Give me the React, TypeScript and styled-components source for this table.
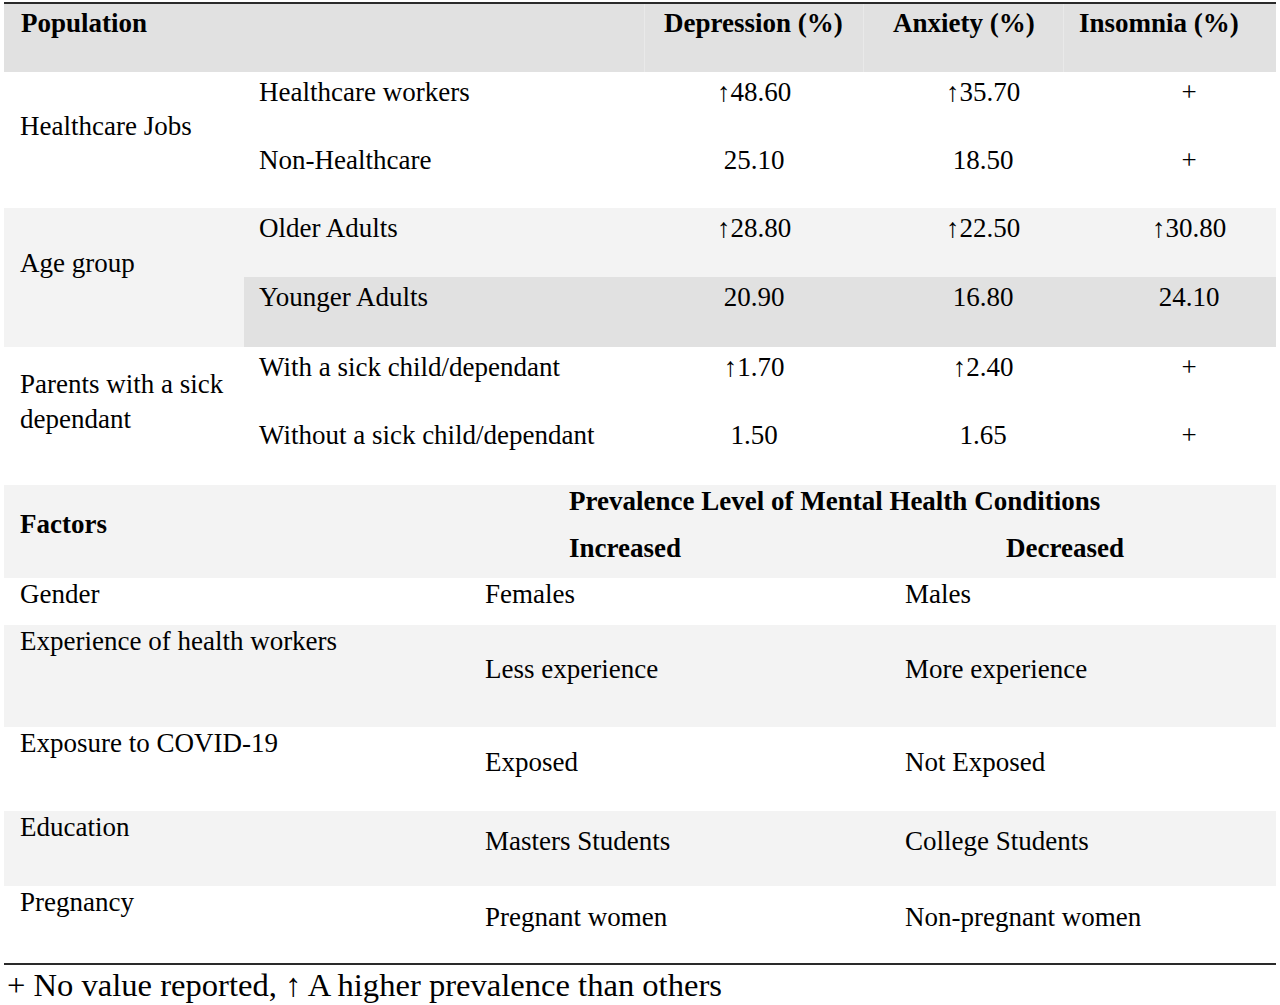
import React from 'react';
import styled, { createGlobalStyle } from 'styled-components';

const GlobalStyle = createGlobalStyle`
  html, body {
    margin: 0;
    padding: 0;
    background: #ffffff;
  }
  body {
    font-family: 'Liberation Serif', 'Times New Roman', serif;
    color: #000;
  }
`;

const SHADE_DARK = '#e1e1e1';
const SHADE_LIGHT = '#f3f3f3';

type Shade = 'none' | 'light' | 'dark';
const shadeColor = (s?: Shade) =>
  s === 'dark' ? SHADE_DARK : s === 'light' ? SHADE_LIGHT : 'transparent';

interface SubRowData {
  label: string;
  values: [string, string, string];
  height: number;
  shade?: Shade;
}

interface GroupData {
  label: string;
  shade?: Shade;
  rows: SubRowData[];
}

interface FactorData {
  factor: string;
  increased: string;
  decreased: string;
  height: number;
  shade?: Shade;
}

const groups: GroupData[] = [
  {
    label: 'Healthcare Jobs',
    rows: [
      { label: 'Healthcare workers', values: ['↑48.60', '↑35.70', '+'], height: 68 },
      { label: 'Non-Healthcare', values: ['25.10', '18.50', '+'], height: 68 },
    ],
  },
  {
    label: 'Age group',
    shade: 'light',
    rows: [
      { label: 'Older Adults', values: ['↑28.80', '↑22.50', '↑30.80'], height: 69 },
      { label: 'Younger Adults', values: ['20.90', '16.80', '24.10'], height: 70, shade: 'dark' },
    ],
  },
  {
    label: 'Parents with a sick dependant',
    rows: [
      { label: 'With a sick child/dependant', values: ['↑1.70', '↑2.40', '+'], height: 68 },
      { label: 'Without a sick child/dependant', values: ['1.50', '1.65', '+'], height: 70 },
    ],
  },
];

const factors: FactorData[] = [
  { factor: 'Gender', increased: 'Females', decreased: 'Males', height: 47 },
  {
    factor: 'Experience of health workers',
    increased: 'Less experience',
    decreased: 'More experience',
    height: 102,
    shade: 'light',
  },
  { factor: 'Exposure to COVID-19', increased: 'Exposed', decreased: 'Not Exposed', height: 84 },
  {
    factor: 'Education',
    increased: 'Masters Students',
    decreased: 'College Students',
    height: 75,
    shade: 'light',
  },
  { factor: 'Pregnancy', increased: 'Pregnant women', decreased: 'Non-pregnant women', height: 77 },
];

const Page = styled.div`
  width: 1272px;
  padding: 2px 4px 0 4px;
  font-size: 27px;
  line-height: 31px;
`;

const TopRule = styled.div`
  height: 2px;
  background: #2a2a2a;
`;

const BottomRule = styled.div`
  height: 2px;
  background: #2a2a2a;
`;

// header columns don't line up with the body columns in the source table
const HeadRow = styled.div`
  display: grid;
  grid-template-columns: 640px 219px 200px 213px;
  height: 68px;
  background: ${SHADE_DARK};
  font-weight: 700;
`;

const HeadCell = styled.div<{ $indent?: number; $divider?: boolean }>`
  padding: 4px 0 0 ${(p) => p.$indent ?? 16}px;
  border-left: 1px solid ${(p) => (p.$divider ? '#e9e9e9' : 'transparent')};
  white-space: nowrap;
`;

const Group = styled.div<{ $shade?: Shade }>`
  display: grid;
  grid-template-columns: 240px 1032px;
  background: ${(p) => shadeColor(p.$shade)};
`;

const GroupLabel = styled.div`
  display: flex;
  align-items: center;
  padding: 0 16px 28px;
  line-height: 35px;
`;

const SubRows = styled.div`
  display: flex;
  flex-direction: column;
`;

const SubRow = styled.div<{ $shade?: Shade }>`
  display: grid;
  grid-template-columns: 400px 220px 238px 174px;
  background: ${(p) => shadeColor(p.$shade)};
`;

const SubCell = styled.div<{ $center?: boolean }>`
  padding: 5px ${(p) => (p.$center ? '0' : '15px')} 0;
  text-align: ${(p) => (p.$center ? 'center' : 'left')};
  white-space: nowrap;
`;

const FactorHead = styled.div`
  display: grid;
  grid-template-columns: 550px 437px 285px;
  grid-template-rows: 31px 31px;
  row-gap: 15px;
  height: 93px;
  box-sizing: border-box;
  padding-top: 1px;
  background: ${SHADE_LIGHT};
  font-weight: 700;
`;

const FactorTitle = styled.div`
  grid-row: 1 / span 2;
  display: flex;
  align-items: center;
  padding: 0 16px;
`;

const SpanHead = styled.div`
  grid-column: 2 / span 2;
  padding-left: 15px;
  white-space: nowrap;
`;

const SubHead = styled.div`
  padding: 1px 0 0 15px;
  white-space: nowrap;
`;

const FactorRow = styled.div<{ $shade?: Shade }>`
  display: grid;
  grid-template-columns: 466px 420px 386px;
  background: ${(p) => shadeColor(p.$shade)};
`;

const FactorName = styled.div`
  padding: 1px 16px 0;
  white-space: nowrap;
`;

const FactorValue = styled.div`
  display: flex;
  align-items: center;
  padding: 0 15px 14px;
  white-space: nowrap;
`;

const Footnote = styled.div`
  font-size: 32.6px;
  line-height: 37px;
  padding: 2px 0 0 3px;
  white-space: nowrap;
`;

export default function App() {
  return (
    <>
      <GlobalStyle />
      <Page>
        <TopRule />
        <HeadRow>
          <HeadCell>Population</HeadCell>
          <HeadCell $indent={19} $divider>
            Depression (%)
          </HeadCell>
          <HeadCell $indent={29} $divider>
            Anxiety (%)
          </HeadCell>
          <HeadCell $indent={15} $divider>
            Insomnia (%)
          </HeadCell>
        </HeadRow>

        {groups.map((g) => (
          <Group key={g.label} $shade={g.shade}>
            <GroupLabel>{g.label}</GroupLabel>
            <SubRows>
              {g.rows.map((r) => (
                <SubRow key={r.label} $shade={r.shade} style={{ height: r.height }}>
                  <SubCell>{r.label}</SubCell>
                  {r.values.map((v, i) => (
                    <SubCell key={i} $center>
                      {v}
                    </SubCell>
                  ))}
                </SubRow>
              ))}
            </SubRows>
          </Group>
        ))}

        <FactorHead>
          <FactorTitle>Factors</FactorTitle>
          <SpanHead>Prevalence Level of Mental Health Conditions</SpanHead>
          <SubHead>Increased</SubHead>
          <SubHead>Decreased</SubHead>
        </FactorHead>

        {factors.map((f) => (
          <FactorRow key={f.factor} $shade={f.shade} style={{ height: f.height }}>
            <FactorName>{f.factor}</FactorName>
            <FactorValue>{f.increased}</FactorValue>
            <FactorValue>{f.decreased}</FactorValue>
          </FactorRow>
        ))}

        <BottomRule />
        <Footnote>+ No value reported, ↑ A higher prevalence than others</Footnote>
      </Page>
    </>
  );
}
